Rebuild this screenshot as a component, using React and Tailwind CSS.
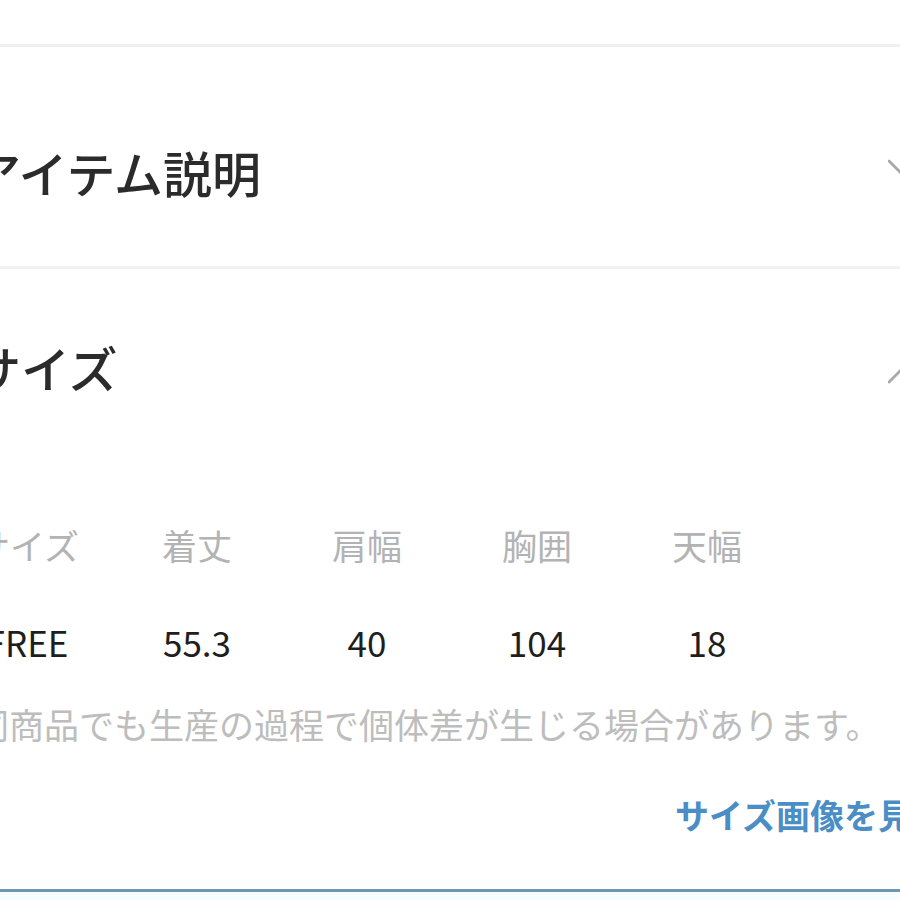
const FONT = { fontFamily: '"Noto Sans CJK JP", "Noto Sans", sans-serif' };

const columns = [
  { label: 'サイズ', value: 'FREE' },
  { label: '着丈', value: '55.3' },
  { label: '肩幅', value: '40' },
  { label: '胸囲', value: '104' },
  { label: '天幅', value: '18' },
];

function Chevron({ up }) {
  return (
    <svg width="30" height="18" viewBox="0 0 30 18" fill="none" className="shrink-0">
      <path
        d={up ? 'M1 16 L15 2 L29 16' : 'M1 2 L15 16 L29 2'}
        stroke="#aaaaaa"
        strokeWidth="3"
        strokeLinecap="round"
        strokeLinejoin="round"
      />
    </svg>
  );
}

export default function App() {
  return (
    <div className="w-[900px] h-[900px] overflow-hidden bg-white" style={FONT}>
      <div className="ml-[-26px] w-[1000px]">
        <div className="h-[44px]" />
        <div className="h-[3px] bg-[#f0f0f0]" />

        {/* item description */}
        <div className="flex items-center pt-[100px] pb-[70px] pr-[56px]">
          <h2 className="ml-[-2px] text-[49px] leading-none font-medium text-[#2b2b2b]">アイテム説明</h2>
          <div className="ml-auto -translate-y-[4px]">
            <Chevron />
          </div>
        </div>
        <div className="h-[3px] bg-[#f2f2f2]" />

        {/* size */}
        <div className="flex items-center pt-[73px] pr-[56px]">
          <h2 className="ml-[-2px] text-[49px] leading-none font-medium text-[#2b2b2b]">サイズ</h2>
          <div className="ml-auto translate-y-[8px]">
            <Chevron up />
          </div>
        </div>

        <div className="ml-[-32px] mt-[136px] grid grid-cols-[170px_170px_170px_170px_170px] text-center">
          {columns.map((c) => (
            <div key={c.label} className="text-[35px] leading-none text-[#b3b3b3]">{c.label}</div>
          ))}
          {columns.map((c) => (
            <div key={c.value} className="mt-[62px] text-[35px] leading-none text-[#1e1e1e]">{c.value}</div>
          ))}
        </div>

        <p className="mt-[47px] text-[35px] leading-none text-[#bdbdbd] whitespace-nowrap">
          同商品でも生産の過程で個体差が生じる場合があります。
        </p>

        <div className="mt-[57px] flex justify-end pr-[28px]">
          <a className="text-[34px] leading-none font-bold text-[#4b8ec6] whitespace-nowrap">サイズ画像を見る</a>
        </div>

        <div className="mt-[57px] h-[3px] bg-[#6d97b3]" />
        <div className="h-[40px] bg-[#f7fcff]" />
      </div>
    </div>
  );
}
